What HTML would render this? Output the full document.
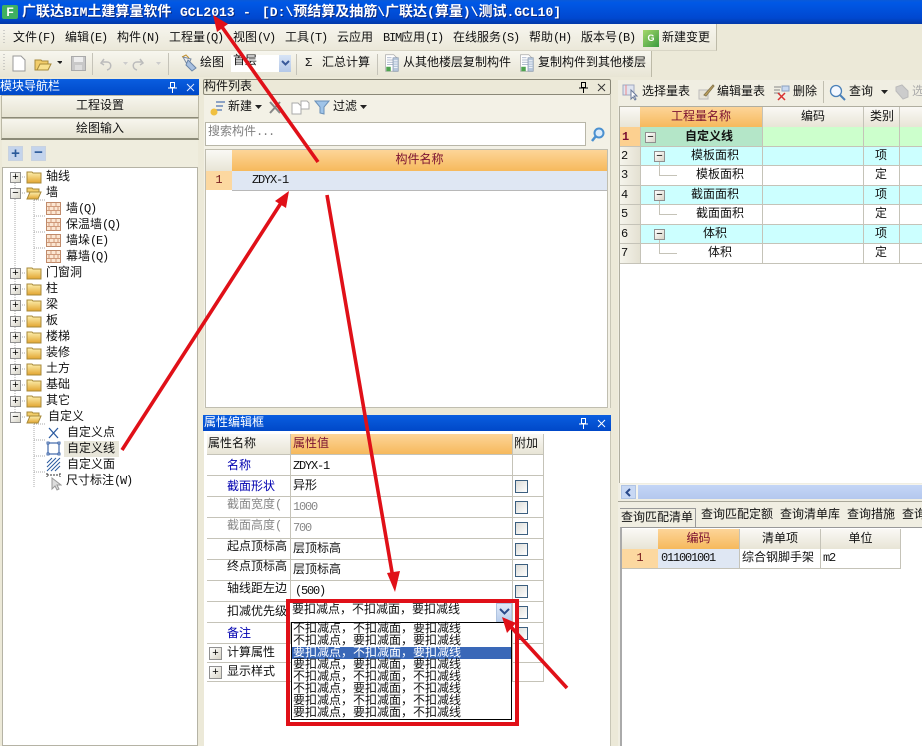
<!DOCTYPE html>
<html><head><meta charset="utf-8">
<style>
html,body{margin:0;padding:0}
body{width:922px;height:746px;position:relative;overflow:hidden;background:#ece9d8;font:12px/16px "Liberation Mono","WenQuanYi Zen Hei","Noto Sans CJK SC",monospace;color:#111}
div,svg{position:absolute}
i{font-style:normal;letter-spacing:-1.2px}
.tt{font-weight:bold;font-size:14px;line-height:17px;color:#fff;text-shadow:1px 1px 0 #0a2a80;white-space:nowrap;top:4px}
.tt i{font-size:13px;letter-spacing:0}
.t{white-space:nowrap}
.c{text-align:center}
.b{box-sizing:border-box}
.hd{background:linear-gradient(#fdd598,#f6b95c)}
.gh{background:linear-gradient(#faf9f5,#e8e5d6)}
.ln{background:#c5c3b8}
.red{color:#7a1030}
.blue{color:#0000b0}
.gr{color:#888}
.cb{left:515px;width:13px;height:13px;border:1px solid #3c5f7f;background:linear-gradient(135deg,#dcdcd8,#fff);box-sizing:border-box}
.ex{width:11px;height:11px;box-sizing:border-box;border:1px solid #909090;background:linear-gradient(135deg,#fff,#d8d5c8);font:11px/9px "Liberation Sans",sans-serif;text-align:center;color:#000}
.blue-h{background:linear-gradient(#0a5ee0,#0048c8);color:#fff}
</style></head>
<body>
<svg width="0" height="0" style="left:0;top:0">
<defs>
<linearGradient id="fg" x1="0" y1="0" x2="0" y2="1"><stop offset="0" stop-color="#fdf0b0"/><stop offset="1" stop-color="#e2a530"/></linearGradient>
<symbol id="f" viewBox="0 0 16 14"><path d="M1 2h5l1 1h8v10H1z" fill="url(#fg)" stroke="#a88a3a"/></symbol>
<symbol id="fo" viewBox="0 0 16 14"><path d="M1 2h5l1 1h6v3H1z" fill="#f2cd6a" stroke="#a88a3a"/><path d="M1 13l3-7h11l-3 7z" fill="url(#fg)" stroke="#a88a3a"/></symbol>
<symbol id="w" viewBox="0 0 15 13"><rect x=".5" y=".5" width="14" height="12" fill="#fbe6d2" stroke="#c08a6a"/><path d="M1 4.500h13M1 8.500h13M5 1v3.500M10 1v3.500M3 4.500v4M8 4.500v4M12 4.500v4M5 8.500v4M10 8.500v4" stroke="#d09a7a" fill="none"/></symbol>
<symbol id="doc" viewBox="0 0 20 24"><path d="M2 1h11l5 5v17H2z" fill="#fff" stroke="#aaa"/><path d="M4 5h6M4 8h8M4 11h8M4 14h8" stroke="#9aa8c0"/><path d="M12 5h7v18h-7z" fill="#b8c8dc" stroke="#8a9ab0"/><path d="M13 9h5M13 12h5M13 15h5M13 18h5" stroke="#fff"/><path d="M3 17h6v6H3z" fill="#4fa24f"/></symbol>
<symbol id="pin" viewBox="0 0 9 11"><path d="M2.500 .5h4v5h-4zM0 6h9M4.500 6v5" fill="none" stroke="currentColor"/></symbol>
</defs>
</svg>

<!-- title -->
<div style="left:0;top:0;width:922px;height:24px;background:linear-gradient(#0a5ad8 0,#0058e6 10%,#0048d0 75%,#0238a8)"></div>
<div style="left:2px;top:5px;width:16px;height:14px;background:#3fb060;border-radius:2px;color:#fff;font:bold 12px/14px 'Liberation Sans';text-align:center">F</div>
<div class="tt" style="left:22px">广联达<i>BIM</i>土建算量软件</div>
<div class="tt" style="left:180px"><i>GCL2013</i></div>
<div class="tt" style="left:243px"><i>-</i></div>
<div class="tt" style="left:262px"><i>[D:\</i>预结算及抽筋<i>\</i>广联达<i>(</i>算量<i>)\</i>测试<i>.GCL10]</i></div>

<!-- menu -->
<div style="left:0;top:24px;width:716px;height:26px;background:linear-gradient(#f7f6ef,#ebe8d9);border-right:1px solid #bdbaa8;border-bottom:1px solid #d8d5c5"></div>
<div class="t" style="left:13px;top:30px">文件<i>(F)</i></div>
<div class="t" style="left:65px;top:30px">编辑<i>(E)</i></div>
<div class="t" style="left:117px;top:30px">构件<i>(N)</i></div>
<div class="t" style="left:169px;top:30px">工程量<i>(Q)</i></div>
<div class="t" style="left:233px;top:30px">视图<i>(V)</i></div>
<div class="t" style="left:285px;top:30px">工具<i>(T)</i></div>
<div class="t" style="left:337px;top:30px">云应用</div>
<div class="t" style="left:383px;top:30px"><i>BIM</i>应用<i>(I)</i></div>
<div class="t" style="left:453px;top:30px">在线服务<i>(S)</i></div>
<div class="t" style="left:529px;top:30px">帮助<i>(H)</i></div>
<div class="t" style="left:581px;top:30px">版本号<i>(B)</i></div>
<div style="left:643px;top:30px;width:16px;height:17px;background:linear-gradient(135deg,#a5d86a,#3a9a40);color:#fff;font:bold 9px/17px 'Liberation Sans';text-align:center">G</div>
<div class="t" style="left:662px;top:30px">新建变更</div>

<!-- toolbar -->
<div style="left:0;top:51px;width:651px;height:26px;background:linear-gradient(#f7f6ef,#e8e5d5);border-right:1px solid #bdbaa8"></div>
<svg style="left:3px;top:30px" width="3" height="42"><path d="M1 0v14M1 24v18" stroke="#aaa" stroke-dasharray="1 2"/></svg>
<svg style="left:12px;top:55px" width="14" height="17"><path d="M1 1h8l4 4v11H1z" fill="#fff" stroke="#999"/></svg>
<svg style="left:34px;top:56px" width="28" height="16"><path d="M1 4h6l1 1h6v9H1z" fill="#f2cd6a" stroke="#a88a3a"/><path d="M3 14l3-6h11l-3 6z" fill="#f9e18e" stroke="#a88a3a"/><path d="M23 5h6l-3 3z" fill="#222"/></svg>
<svg style="left:71px;top:56px" width="15" height="15"><rect x=".5" y=".5" width="14" height="14" fill="#c8c8c8" stroke="#aaa"/><rect x="3" y="1" width="9" height="5" fill="#eee"/><rect x="4" y="9" width="7" height="5" fill="#ddd"/></svg>
<div style="left:92px;top:53px;width:1px;height:22px;background:#c5c3b8"></div>
<svg style="left:100px;top:56px" width="62" height="15"><path d="M4 3l-3 4 3 2M2 6h5c5 0 5 7 0 8" fill="none" stroke="#bbb" stroke-width="1.500"/><path d="M23 6h5l-2.500 3z" fill="#ccc"/><path d="M40 3l3 4-3 2M42 6h-5c-5 0-5 7 0 8" fill="none" stroke="#bbb" stroke-width="1.500"/><path d="M56 6h5l-2.500 3z" fill="#ccc"/></svg>
<div style="left:168px;top:53px;width:1px;height:22px;background:#c5c3b8"></div>
<svg style="left:180px;top:54px" width="18" height="18"><path d="M3 3l8 2-3 7z" fill="#eee" stroke="#7a8aa0"/><path d="M8 6l8 8-4 3-6-6z" fill="#a8c0e0" stroke="#6a85a8"/><path d="M2 3l4-2 3 3" fill="none" stroke="#c09030"/></svg>
<div class="t" style="left:200px;top:55px">绘图</div>
<div style="left:231px;top:55px;width:48px;height:17px;background:#fff"></div>
<div style="left:279px;top:55px;width:12px;height:17px;background:linear-gradient(#d7e4f6,#b4c8e8)"></div>
<div class="t" style="left:233px;top:53px">首层</div>
<svg style="left:281px;top:60px" width="9" height="7"><path d="M1 1l3.500 3.500L8 1" fill="none" stroke="#3a5a9a" stroke-width="2"/></svg>
<div style="left:296px;top:54px;width:1px;height:21px;background:#c5c3b8"></div>
<div class="t" style="left:305px;top:55px">Σ</div>
<div class="t" style="left:322px;top:55px">汇总计算</div>
<div style="left:377px;top:54px;width:1px;height:21px;background:#c5c3b8"></div>
<svg style="left:383px;top:54px" width="17" height="18"><use href="#doc"/></svg>
<div class="t" style="left:403px;top:55px">从其他楼层复制构件</div>
<svg style="left:518px;top:54px" width="17" height="18"><use href="#doc"/></svg>
<div class="t" style="left:538px;top:55px">复制构件到其他楼层</div>

<!-- left nav -->
<div class="blue-h" style="left:0;top:79px;width:199px;height:16px"></div>
<div class="t" style="left:0;top:79px;color:#fff">模块导航栏</div>
<svg style="left:168px;top:82px;color:#fff" width="9" height="11"><use href="#pin"/></svg>
<svg style="left:186px;top:83px" width="9" height="9"><path d="M1 1l7 7M8 1l-7 7" stroke="#dfe8ff"/></svg>
<div class="b c" style="left:1px;top:95px;width:198px;height:23px;line-height:21px;background:linear-gradient(#f7f6ee,#e6e3d2);border:1px solid #bbb8a5;border-bottom-color:#8c8a78">工程设置</div>
<div class="b c" style="left:1px;top:118px;width:198px;height:22px;line-height:20px;background:linear-gradient(#f7f6ee,#e6e3d2);border:1px solid #bbb8a5;border-bottom:2px solid #8c8a78">绘图输入</div>
<div style="left:2px;top:140px;width:196px;height:27px;background:#efedde"></div>
<div class="b" style="left:8px;top:146px;width:15px;height:15px;background:#c4d4ec;border:1px solid #c8d2e0;color:#2a5a9a;font:bold 15px/13px 'Liberation Sans';text-align:center">+</div>
<div class="b" style="left:31px;top:146px;width:15px;height:15px;background:#c4d4ec;border:1px solid #c8d2e0;color:#2a5a9a;font:bold 15px/12px 'Liberation Sans';text-align:center">−</div>
<div class="b" style="left:2px;top:167px;width:196px;height:579px;background:#fff;border:1px solid #b5b3a5"></div>

<svg style="left:0;top:170px" width="60" height="320"><path d="M15 7V247M34 30v64M34 254v64M34 30h12M34 46h12M34 62h12M34 78h12M34 254h12M34 270h12M34 286h12M34 302h12M20 7h6M20 23h6M20 103h6M20 119h6M20 135h6M20 151h6M20 167h6M20 183h6M20 199h6M20 215h6M20 231h6M20 247h6" stroke="#aaa" stroke-dasharray="1 1" fill="none"/></svg>

<div class="ex" style="left:10px;top:172px">+</div><svg style="left:26px;top:170px" width="16" height="14"><use href="#f"/></svg><div class="t" style="left:46px;top:169px">轴线</div>
<div class="ex" style="left:10px;top:188px">−</div><svg style="left:26px;top:186px" width="16" height="14"><use href="#fo"/></svg><div class="t" style="left:46px;top:185px">墙</div>
<svg style="left:46px;top:202px" width="15" height="13"><use href="#w"/></svg><div class="t" style="left:66px;top:201px">墙<i>(Q)</i></div>
<svg style="left:46px;top:218px" width="15" height="13"><use href="#w"/></svg><div class="t" style="left:66px;top:217px">保温墙<i>(Q)</i></div>
<svg style="left:46px;top:234px" width="15" height="13"><use href="#w"/></svg><div class="t" style="left:66px;top:233px">墙垛<i>(E)</i></div>
<svg style="left:46px;top:250px" width="15" height="13"><use href="#w"/></svg><div class="t" style="left:66px;top:249px">幕墙<i>(Q)</i></div>
<div class="ex" style="left:10px;top:268px">+</div><svg style="left:26px;top:266px" width="16" height="14"><use href="#f"/></svg><div class="t" style="left:46px;top:265px">门窗洞</div>
<div class="ex" style="left:10px;top:284px">+</div><svg style="left:26px;top:282px" width="16" height="14"><use href="#f"/></svg><div class="t" style="left:46px;top:281px">柱</div>
<div class="ex" style="left:10px;top:300px">+</div><svg style="left:26px;top:298px" width="16" height="14"><use href="#f"/></svg><div class="t" style="left:46px;top:297px">梁</div>
<div class="ex" style="left:10px;top:316px">+</div><svg style="left:26px;top:314px" width="16" height="14"><use href="#f"/></svg><div class="t" style="left:46px;top:313px">板</div>
<div class="ex" style="left:10px;top:332px">+</div><svg style="left:26px;top:330px" width="16" height="14"><use href="#f"/></svg><div class="t" style="left:46px;top:329px">楼梯</div>
<div class="ex" style="left:10px;top:348px">+</div><svg style="left:26px;top:346px" width="16" height="14"><use href="#f"/></svg><div class="t" style="left:46px;top:345px">装修</div>
<div class="ex" style="left:10px;top:364px">+</div><svg style="left:26px;top:362px" width="16" height="14"><use href="#f"/></svg><div class="t" style="left:46px;top:361px">土方</div>
<div class="ex" style="left:10px;top:380px">+</div><svg style="left:26px;top:378px" width="16" height="14"><use href="#f"/></svg><div class="t" style="left:46px;top:377px">基础</div>
<div class="ex" style="left:10px;top:396px">+</div><svg style="left:26px;top:394px" width="16" height="14"><use href="#f"/></svg><div class="t" style="left:46px;top:393px">其它</div>
<div class="ex" style="left:10px;top:412px">−</div><svg style="left:26px;top:410px" width="16" height="14"><use href="#fo"/></svg><div class="t" style="left:48px;top:409px">自定义</div>
<svg style="left:46px;top:426px" width="15" height="14"><path d="M3 2l9 10M12 2l-9 10" stroke="#2a5aa0" stroke-width="1.300"/></svg><div class="t" style="left:67px;top:425px">自定义点</div>
<div style="left:64px;top:441px;width:55px;height:16px;background:#e8e6da"></div>
<svg style="left:46px;top:441px" width="15" height="15"><rect x="2" y="2" width="11" height="11" fill="none" stroke="#1a4a9a"/><path d="M1 1h2v2H1zM12 1h2v2h-2zM1 12h2v2H1zM12 12h2v2h-2z" fill="#fff" stroke="#1a4a9a" stroke-width=".8"/></svg><div class="t" style="left:67px;top:441px">自定义线</div>
<svg style="left:46px;top:457px" width="15" height="15"><path d="M1 6l5-5M1 10l9-9M1 14l13-13M5 14l9-9M9 14l5-5" stroke="#2a5aa0"/></svg><div class="t" style="left:67px;top:457px">自定义面</div>
<svg style="left:46px;top:473px" width="16" height="18"><path d="M1 2h13M1 0v4M14 0v4" stroke="#333" stroke-dasharray="2 1"/><path d="M6 5v11l3-3 2 4 2-1-2-4h4z" fill="#ddd" stroke="#999"/></svg><div class="t" style="left:66px;top:473px">尺寸标注<i>(W)</i></div>

<!-- component list -->
<div class="b" style="left:203px;top:79px;width:408px;height:16px;background:#ece9d8;border:1px solid #8a8878;border-radius:2px"></div>
<div class="t" style="left:204px;top:79px">构件列表</div>
<svg style="left:579px;top:82px;color:#000" width="9" height="11"><use href="#pin"/></svg>
<svg style="left:597px;top:83px" width="9" height="9"><path d="M1 1l7 7M8 1l-7 7" stroke="#333"/></svg>
<div style="left:204px;top:95px;width:406px;height:313px;background:#f3f1e6;border-right:1px solid #c8c6b6"></div>
<svg style="left:209px;top:100px" width="18" height="16"><path d="M7 2h9M7 6h7M7 10h6" stroke="#6a88b8" stroke-width="1.500"/><circle cx="5" cy="12" r="3.500" fill="#f0c040"/></svg>
<div class="t" style="left:228px;top:99px">新建</div>
<svg style="left:255px;top:105px" width="7" height="5"><path d="M0 0h7l-3.500 4z" fill="#222"/></svg>
<svg style="left:268px;top:100px" width="14" height="15"><path d="M2 2l10 11M12 2L2 13" stroke="#888" stroke-width="2"/></svg>
<svg style="left:291px;top:100px" width="19" height="16"><path d="M1 3h6l3 3v8H1z" fill="#fff" stroke="#aaa"/><path d="M10 1h6l2 2v6h-8z" fill="#fff" stroke="#aaa"/></svg>
<svg style="left:314px;top:100px" width="16" height="15"><path d="M1 1h14l-5 6v7l-4-1V7z" fill="#9fc4e8" stroke="#6a90b8"/></svg>
<div class="t" style="left:333px;top:99px">过滤</div>
<svg style="left:360px;top:105px" width="7" height="5"><path d="M0 0h7l-3.500 4z" fill="#222"/></svg>
<div class="b" style="left:205px;top:122px;width:381px;height:24px;background:#fff;border:1px solid #b8b6a8"></div>
<div class="t" style="left:208px;top:124px;color:#808080">搜索构件<i>...</i></div>
<svg style="left:590px;top:127px" width="16" height="16"><circle cx="9" cy="6" r="4.500" fill="#dcecfa" stroke="#4a90d0" stroke-width="2"/><path d="M6 9l-4 5" stroke="#4a90d0" stroke-width="2.500"/></svg>
<div class="b" style="left:205px;top:149px;width:403px;height:259px;background:#fff;border:1px solid #c0beb0"></div>
<div class="gh" style="left:206px;top:150px;width:26px;height:21px"></div>
<div class="hd c red" style="left:232px;top:150px;width:375px;height:21px;line-height:20px">构件名称</div>
<div class="c" style="left:206px;top:171px;width:26px;height:19px;background:#fcd8a0;color:#7a2020;line-height:19px">1</div>
<div class="t" style="left:232px;top:171px;width:375px;height:19px;background:#dfe7f3;border-bottom:1px solid #b8b8b8;line-height:19px;text-indent:20px"><i>ZDYX-1</i></div>

<!-- property -->
<div class="blue-h" style="left:203px;top:415px;width:408px;height:16px"></div>
<div class="t" style="left:204px;top:415px;color:#fff">属性编辑框</div>
<svg style="left:579px;top:418px;color:#fff" width="9" height="11"><use href="#pin"/></svg>
<svg style="left:597px;top:419px" width="9" height="9"><path d="M1 1l7 7M8 1l-7 7" stroke="#fff"/></svg>
<div style="left:204px;top:431px;width:406px;height:315px;background:#fff;border-right:1px solid #c8c6b6"></div>

<div class="gh" style="left:207px;top:434px;width:83px;height:20px;line-height:20px;text-indent:1px">属性名称</div>
<div class="hd red" style="left:290px;top:434px;width:222px;height:20px;line-height:20px;text-indent:3px">属性值</div>
<div class="gh" style="left:513px;top:434px;width:30px;height:20px;line-height:20px;text-indent:1px">附加</div>

<div class="ln" style="left:207px;top:454px;width:337px;height:1px"></div>
<div class="ln" style="left:207px;top:475px;width:337px;height:1px"></div>
<div class="ln" style="left:207px;top:496px;width:337px;height:1px"></div>
<div class="ln" style="left:207px;top:517px;width:337px;height:1px"></div>
<div class="ln" style="left:207px;top:538px;width:337px;height:1px"></div>
<div class="ln" style="left:207px;top:559px;width:337px;height:1px"></div>
<div class="ln" style="left:207px;top:580px;width:337px;height:1px"></div>
<div class="ln" style="left:207px;top:601px;width:337px;height:1px"></div>
<div class="ln" style="left:207px;top:622px;width:337px;height:1px"></div>
<div class="ln" style="left:207px;top:643px;width:337px;height:1px"></div>
<div class="ln" style="left:207px;top:662px;width:337px;height:1px"></div>
<div class="ln" style="left:207px;top:681px;width:337px;height:1px"></div>
<div class="ln" style="left:290px;top:434px;width:1px;height:210px"></div>
<div class="ln" style="left:512px;top:434px;width:1px;height:248px"></div>
<div class="ln" style="left:543px;top:434px;width:1px;height:248px"></div>

<div class="t blue" style="left:227px;top:458px">名称</div><div class="t" style="left:293px;top:458px"><i>ZDYX-1</i></div>
<div class="t blue" style="left:227px;top:479px">截面形状</div><div class="t" style="left:293px;top:478px">异形</div><div class="cb" style="top:480px"></div>
<div class="t gr" style="left:227px;top:497px">截面宽度<i>(</i></div><div class="t gr" style="left:293px;top:499px"><i>1000</i></div><div class="cb" style="top:501px"></div>
<div class="t gr" style="left:227px;top:518px">截面高度<i>(</i></div><div class="t gr" style="left:293px;top:520px"><i>700</i></div><div class="cb" style="top:522px"></div>
<div class="t" style="left:227px;top:539px">起点顶标高</div><div class="t" style="left:293px;top:541px">层顶标高</div><div class="cb" style="top:543px"></div>
<div class="t" style="left:227px;top:559px">终点顶标高</div><div class="t" style="left:293px;top:562px">层顶标高</div><div class="cb" style="top:564px"></div>
<div class="t" style="left:227px;top:581px">轴线距左边</div><div class="t" style="left:295px;top:583px"><i>(500)</i></div><div class="cb" style="top:585px"></div>
<div class="t" style="left:227px;top:604px">扣减优先级</div><div class="cb" style="top:606px"></div>
<div class="t blue" style="left:227px;top:626px">备注</div><div class="cb" style="top:627px"></div>
<div class="ex" style="left:209px;top:647px;width:13px;height:13px;line-height:11px">+</div><div class="t" style="left:227px;top:645px">计算属性</div>
<div class="ex" style="left:209px;top:666px;width:13px;height:13px;line-height:11px">+</div><div class="t" style="left:227px;top:664px">显示样式</div>

<!-- dropdown -->
<div style="left:290px;top:602px;width:222px;height:20px;background:#fff"></div>
<div class="t" style="left:292px;top:602px">要扣减点，不扣减面，要扣减线</div>
<div style="left:496px;top:603px;width:16px;height:19px;background:linear-gradient(#e2ecf9,#b9cdec);border:1px solid #b0c4e0;box-sizing:border-box"></div>
<svg style="left:499px;top:608px" width="11" height="8"><path d="M1 1l4.500 4.500L10 1" fill="none" stroke="#2a4a8a" stroke-width="2"/></svg>
<div class="b" style="left:291px;top:622px;width:221px;height:98px;background:#fff;border:1px solid #000"></div>
<div style="left:292px;top:647px;width:219px;height:12px;background:#3a68b8"></div>
<div class="t" style="left:293px;top:623px;line-height:12px">不扣减点，不扣减面，要扣减线</div>
<div class="t" style="left:293px;top:635px;line-height:12px">不扣减点，要扣减面，要扣减线</div>
<div class="t" style="left:293px;top:647px;line-height:12px;color:#fff">要扣减点，不扣减面，要扣减线</div>
<div class="t" style="left:293px;top:659px;line-height:12px">要扣减点，要扣减面，要扣减线</div>
<div class="t" style="left:293px;top:671px;line-height:12px">不扣减点，不扣减面，不扣减线</div>
<div class="t" style="left:293px;top:683px;line-height:12px">不扣减点，要扣减面，不扣减线</div>
<div class="t" style="left:293px;top:695px;line-height:12px">要扣减点，不扣减面，不扣减线</div>
<div class="t" style="left:293px;top:707px;line-height:12px">要扣减点，要扣减面，不扣减线</div>

<!-- right panel -->
<div style="left:618px;top:80px;width:304px;height:666px;background:#f0eee2"></div>
<svg style="left:622px;top:84px" width="17" height="17"><rect x="1" y="1" width="11" height="10" fill="#dfe4f0" stroke="#a0a8c0"/><path d="M4 1v10" stroke="#e88"/><path d="M9 6v9l2-2 2 3 1-1-2-3h3z" fill="#fff" stroke="#6a7a9a"/></svg>
<div class="t" style="left:642px;top:84px">选择量表</div>
<svg style="left:698px;top:84px" width="17" height="16"><rect x="1" y="6" width="9" height="9" fill="#e8e4d8" stroke="#bbb"/><path d="M6 11L15 1l1 1-8 10z" fill="#c8a860" stroke="#8a7a50"/></svg>
<div class="t" style="left:717px;top:84px">编辑量表</div>
<svg style="left:773px;top:84px" width="17" height="17"><path d="M1 3h7M1 6h6M1 9h6" stroke="#888"/><path d="M9 2h7v5H9z" fill="#c8d8f0" stroke="#8aa0c0"/><path d="M5 9l7 7M12 9l-7 7" stroke="#d83030" stroke-width="1.500"/></svg>
<div class="t" style="left:793px;top:84px">删除</div>
<div style="left:823px;top:81px;width:1px;height:22px;background:#c0beb0"></div>
<svg style="left:829px;top:84px" width="17" height="17"><circle cx="7" cy="7" r="5.500" fill="#f4f8ff" stroke="#4a80b8" stroke-width="1.300"/><path d="M11 11l5 5" stroke="#4a80b8" stroke-width="2"/></svg>
<div class="t" style="left:849px;top:84px">查询</div>
<svg style="left:881px;top:90px" width="7" height="5"><path d="M0 0h7l-3.500 4z" fill="#222"/></svg>
<svg style="left:894px;top:84px" width="16" height="16"><path d="M2 3l6-2 6 6v6l-5 2-7-8z" fill="#ccc" stroke="#bbb"/></svg>
<div class="t" style="left:912px;top:84px;color:#aaa">选</div>

<div class="b" style="left:619px;top:106px;width:303px;height:377px;background:#fff;border-left:1px solid #b0aea0;border-top:1px solid #b0aea0"></div>
<div class="gh" style="left:620px;top:107px;width:20px;height:20px"></div>
<div class="hd c red" style="left:640px;top:107px;width:122px;height:20px;line-height:20px">工程量名称</div>
<div class="gh c" style="left:762px;top:107px;width:100px;height:20px;line-height:20px;border-left:1px solid #c5c3b8">编码</div>
<div class="gh c" style="left:863px;top:107px;width:36px;height:20px;line-height:20px;border-left:1px solid #c5c3b8">类别</div>
<div class="gh" style="left:899px;top:107px;width:23px;height:20px;border-left:1px solid #c5c3b8"></div>

<div style="left:620px;top:127px;width:20px;height:20px;background:#fcd090;color:#7a1030;font-weight:bold;line-height:20px;text-indent:2px">1</div>
<div style="left:640px;top:127px;width:122px;height:20px;background:#b4e6c8"></div>
<div style="left:762px;top:127px;width:160px;height:20px;background:#ccffcc"></div>
<div style="left:620px;top:147px;width:20px;height:117px;background:linear-gradient(90deg,#f5f4ec,#e4e1d2)"></div>
<div style="left:640px;top:147px;width:282px;height:19px;background:#ccffff"></div>
<div style="left:640px;top:186px;width:282px;height:19px;background:#ccffff"></div>
<div style="left:640px;top:225px;width:282px;height:19px;background:#ccffff"></div>
<div class="ln" style="left:620px;top:146px;width:302px;height:1px"></div>
<div class="ln" style="left:620px;top:165px;width:302px;height:1px"></div>
<div class="ln" style="left:620px;top:185px;width:302px;height:1px"></div>
<div class="ln" style="left:620px;top:204px;width:302px;height:1px"></div>
<div class="ln" style="left:620px;top:224px;width:302px;height:1px"></div>
<div class="ln" style="left:620px;top:243px;width:302px;height:1px"></div>
<div class="ln" style="left:620px;top:263px;width:302px;height:1px"></div>
<div class="ln" style="left:762px;top:127px;width:1px;height:137px"></div>
<div class="ln" style="left:863px;top:127px;width:1px;height:137px"></div>
<div class="ln" style="left:899px;top:127px;width:1px;height:137px"></div>
<div class="ln" style="left:640px;top:127px;width:1px;height:137px"></div>

<div class="t" style="left:621px;top:148px">2</div>
<div class="t" style="left:621px;top:167px">3</div>
<div class="t" style="left:621px;top:187px">4</div>
<div class="t" style="left:621px;top:206px">5</div>
<div class="t" style="left:621px;top:226px">6</div>
<div class="t" style="left:621px;top:245px">7</div>

<div class="ex" style="left:645px;top:132px">−</div>
<div class="t" style="left:685px;top:129px;font-weight:bold">自定义线</div>
<div class="ex" style="left:654px;top:151px">−</div><div class="t" style="left:691px;top:148px">模板面积</div><div class="t c" style="left:863px;width:36px;top:148px">项</div>
<div class="ln" style="left:659px;top:162px;width:1px;height:13px"></div><div class="ln" style="left:659px;top:175px;width:18px;height:1px"></div>
<div class="t" style="left:696px;top:167px">模板面积</div><div class="t c" style="left:863px;width:36px;top:167px">定</div>
<div class="ex" style="left:654px;top:190px">−</div><div class="t" style="left:691px;top:187px">截面面积</div><div class="t c" style="left:863px;width:36px;top:187px">项</div>
<div class="ln" style="left:659px;top:201px;width:1px;height:13px"></div><div class="ln" style="left:659px;top:214px;width:18px;height:1px"></div>
<div class="t" style="left:696px;top:206px">截面面积</div><div class="t c" style="left:863px;width:36px;top:206px">定</div>
<div class="ex" style="left:654px;top:229px">−</div><div class="t" style="left:703px;top:226px">体积</div><div class="t c" style="left:863px;width:36px;top:226px">项</div>
<div class="ln" style="left:659px;top:240px;width:1px;height:13px"></div><div class="ln" style="left:659px;top:253px;width:18px;height:1px"></div>
<div class="t" style="left:708px;top:245px">体积</div><div class="t c" style="left:863px;width:36px;top:245px">定</div>

<!-- scrollbar -->
<div style="left:620px;top:484px;width:302px;height:15px;background:#f5f4ec"></div>
<div class="b" style="left:621px;top:485px;width:15px;height:14px;background:#c8d8f4;border:1px solid #b0c4e4"></div>
<svg style="left:625px;top:488px" width="7" height="9"><path d="M5 1L1.500 4.500 5 8" fill="none" stroke="#2a4a8a" stroke-width="2"/></svg>
<div style="left:638px;top:485px;width:284px;height:14px;background:linear-gradient(#c4d6f6,#b4c8ee)"></div>
<div style="left:618px;top:501px;width:304px;height:1px;background:#a8a698"></div>
<div style="left:618px;top:502px;width:304px;height:244px;background:#f0eee2"></div>

<!-- tabs -->
<div class="t" style="left:621px;top:510px">查询匹配清单</div>
<div style="left:620px;top:508px;width:75px;height:1px;background:#999"></div>
<div style="left:695px;top:508px;width:1px;height:19px;background:#999"></div>
<div class="t" style="left:701px;top:507px">查询匹配定额</div>
<div class="t" style="left:780px;top:507px">查询清单库</div>
<div class="t" style="left:847px;top:507px">查询措施</div>
<div class="t" style="left:902px;top:507px">查询</div>
<div style="left:620px;top:527px;width:302px;height:219px;background:#fff;border-top:1px solid #999;border-left:2px solid #aaa;box-sizing:border-box"></div>
<div class="gh" style="left:622px;top:529px;width:36px;height:20px"></div>
<div class="hd c red" style="left:658px;top:529px;width:81px;height:20px;line-height:20px">编码</div>
<div class="gh c" style="left:739px;top:529px;width:81px;height:20px;line-height:20px;border-left:1px solid #c5c3b8;box-sizing:border-box">清单项</div>
<div class="gh c" style="left:820px;top:529px;width:81px;height:20px;line-height:20px;border-left:1px solid #c5c3b8;border-right:1px solid #c5c3b8;box-sizing:border-box">单位</div>
<div class="c" style="left:622px;top:549px;width:36px;height:19px;background:#fcd8a0;line-height:19px;color:#7a2020">1</div>
<div style="left:658px;top:549px;width:81px;height:19px;background:#dfe7f3;line-height:19px;text-indent:3px"><i>011001001</i></div>
<div style="left:739px;top:549px;width:81px;height:19px;line-height:19px;text-indent:2px;border-left:1px solid #c5c3b8;box-sizing:border-box">综合钢脚手架</div>
<div style="left:820px;top:549px;width:81px;height:19px;line-height:19px;text-indent:2px;border-left:1px solid #c5c3b8;border-right:1px solid #c5c3b8;box-sizing:border-box"><i>m2</i></div>
<div class="ln" style="left:622px;top:568px;width:279px;height:1px"></div>

<!-- annotations -->
<div class="b" style="left:286px;top:599px;width:233px;height:127px;border:4px solid #e01018"></div>
<svg style="left:0;top:0" width="922" height="746">
<g stroke="#e01018" stroke-width="3.600" fill="#e01018">
<path d="M318 162L222 27" fill="none"/><path d="M213 15l15 9-11 8z" stroke="none"/>
<path d="M122 450L281 203" fill="none"/><path d="M289 191l-3 17-11-7z" stroke="none"/>
<path d="M327 195L393 578" fill="none"/><path d="M395 592l-8-19 13-2z" stroke="none"/>
<path d="M567 688L511 627" fill="none"/><path d="M502 617l14 6-9 10z" stroke="none"/>
</g>
</svg>
</body></html>
